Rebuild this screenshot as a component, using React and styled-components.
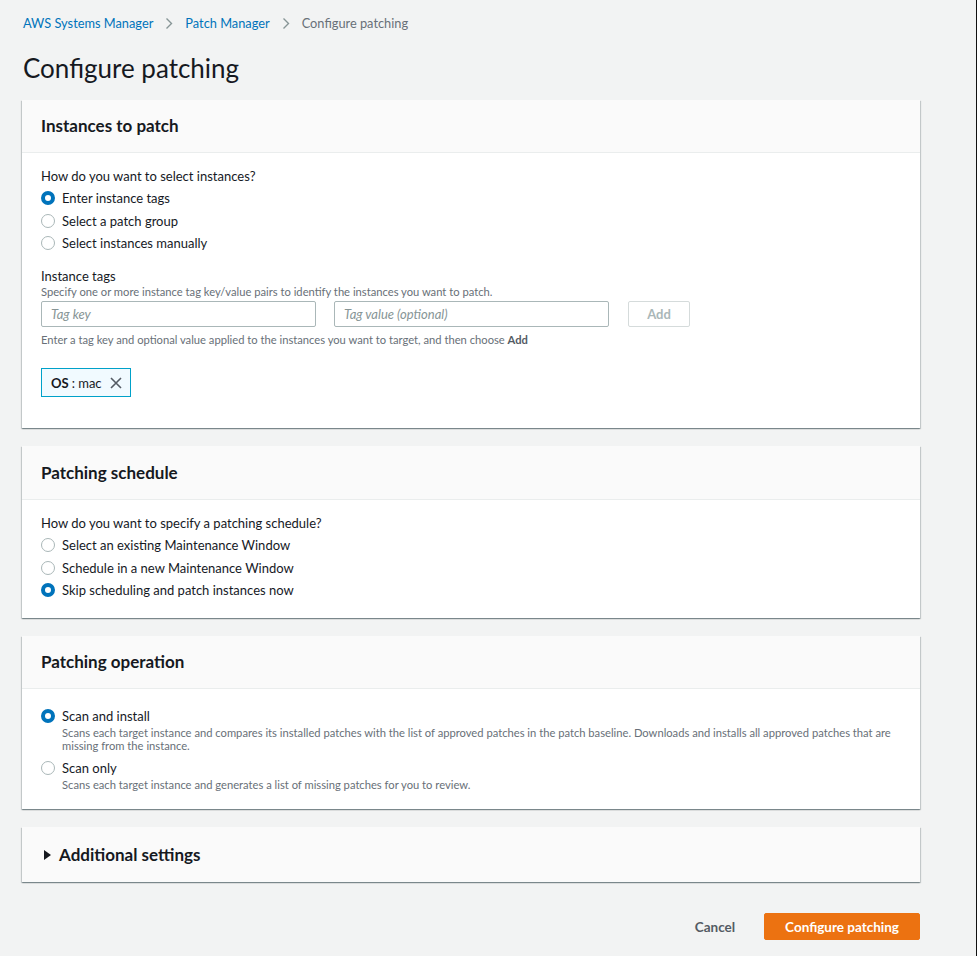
import React from 'react';
import styled, { createGlobalStyle } from 'styled-components';

const GlobalStyle = createGlobalStyle`
  html, body {
    margin: 0;
    padding: 0;
    background: #f2f3f3;
  }
  body {
    font-family: Lato, "Open Sans", Arial, sans-serif;
    color: #16191f;
    -webkit-font-smoothing: antialiased;
  }
  * {
    box-sizing: border-box;
  }
`;

const Page = styled.div`
  min-height: 956px;
  padding: 14px 56px 24px 22px;
  background: #f2f3f3;
  border-right: 1px solid #111;
`;

const Crumbs = styled.nav`
  display: flex;
  align-items: center;
  height: 18px;
  padding-left: 1px;
  font-size: 12.8px;
`;

const Crumb = styled.a`
  color: ${p => (p.$current ? '#687078' : '#0073bb')};
  text-decoration: none;
`;

const Sep = styled.span`
  display: inline-flex;
  margin: 0 12px;
  color: #879596;
`;

const Title = styled.h1`
  margin: 20px 0 16px 1px;
  font-size: 26px;
  line-height: 32px;
  font-weight: 400;
`;

const Card = styled.section`
  background: #fff;
  margin-bottom: 18px;
  box-shadow: 0 1px 1px 0 rgba(0, 28, 36, 0.3), 1px 1px 1px 0 rgba(0, 28, 36, 0.15),
    -1px 1px 1px 0 rgba(0, 28, 36, 0.15);
`;

const CardHeader = styled.header`
  display: flex;
  align-items: center;
  height: ${p => p.$h || 53}px;
  padding: 0 19px;
  background: #fafafa;
  border-bottom: 1px solid #eaeded;
`;

const CardTitle = styled.h2`
  margin: 0;
  font-size: 17px;
  line-height: 22px;
  font-weight: 700;
`;

const CardBody = styled.div`
  padding: ${p => p.$pad || '12px 19px 16px'};
`;

const Question = styled.div`
  font-size: 13px;
  line-height: 20px;
  margin-bottom: 1px;
`;

const RadioRow = styled.label`
  display: flex;
  align-items: ${p => (p.$top ? 'flex-start' : 'center')};
  min-height: 22.5px;
  font-size: 13px;
  line-height: 20px;
  margin-top: ${p => p.$gap || 0}px;
`;

const RadioDot = styled.span`
  flex: none;
  width: 14px;
  height: 14px;
  margin-right: 7px;
  margin-top: ${p => (p.$top ? '3px' : '0')};
  border-radius: 50%;
  background: #fff;
  border: ${p => (p.$checked ? '4px solid #0073bb' : '1px solid #aab7b8')};
`;

const RadioText = styled.div`
  display: flex;
  flex-direction: column;
`;

const Hint = styled.div`
  font-size: 11.2px;
  line-height: 13.5px;
  color: #687078;
`;

const FieldLabel = styled.div`
  margin-top: 12px;
  font-size: 13px;
  line-height: 18px;
`;

const InputRow = styled.div`
  display: flex;
  align-items: center;
  margin-top: 3px;
`;

const Input = styled.input`
  width: 275px;
  height: 26px;
  margin-right: ${p => p.$mr}px;
  padding: 0 9px;
  font-family: inherit;
  font-size: 13px;
  border: 1px solid #aab7b8;
  border-radius: 2px;
  background: #fff;
  outline: none;
  &::placeholder {
    color: #879596;
    font-style: italic;
  }
`;

const AddButton = styled.button`
  width: 62px;
  height: 26px;
  font-family: inherit;
  font-size: 13px;
  font-weight: 700;
  color: #aab7b8;
  background: #fff;
  border: 1px solid #d5dbdb;
  border-radius: 2px;
`;

const HelpText = styled(Hint)`
  margin-top: 5px;
  line-height: 16px;
  b {
    color: #545b64;
  }
`;

const Token = styled.div`
  display: inline-flex;
  align-items: center;
  height: 29px;
  margin-top: 20px;
  padding: 0 7px 0 9px;
  font-size: 13px;
  background: #f1faff;
  border: 1px solid #00a1c9;
  b {
    margin-right: 3px;
  }
`;

const TokenClose = styled.span`
  display: inline-flex;
  margin-left: 7px;
  color: #545b64;
`;

const Expander = styled.section`
  display: flex;
  align-items: center;
  height: 55px;
  margin-top: 1px;
  padding: 0 22px;
  background: #fafafa;
  box-shadow: 0 1px 1px 0 rgba(0, 28, 36, 0.3), 1px 1px 1px 0 rgba(0, 28, 36, 0.15),
    -1px 1px 1px 0 rgba(0, 28, 36, 0.15);
`;

const Caret = styled.span`
  width: 0;
  height: 0;
  margin-right: 8px;
  border-top: 5px solid transparent;
  border-bottom: 5px solid transparent;
  border-left: 7px solid #16191f;
`;

const Footer = styled.div`
  display: flex;
  justify-content: flex-end;
  align-items: center;
  gap: 8px;
  margin-top: 31px;
`;

const Button = styled.button`
  height: 27px;
  padding: 0 20px;
  font-family: inherit;
  font-size: 13.5px;
  font-weight: 700;
  border-radius: 2px;
  border: 1px solid ${p => (p.$primary ? '#ec7211' : 'transparent')};
  background: ${p => (p.$primary ? '#ec7211' : 'transparent')};
  color: ${p => (p.$primary ? '#fff' : '#545b64')};
`;

const Chevron = () => (
  <svg width="8" height="13" viewBox="0 0 8 13" fill="none">
    <path d="M1.5 1.5 6.5 6.5 1.5 11.5" stroke="currentColor" strokeWidth="1.4" />
  </svg>
);

const Radio = ({ checked, label, hint, gap }) => (
  <RadioRow $top={!!hint} $gap={gap}>
    <RadioDot $checked={checked} $top={!!hint} />
    <RadioText>
      {label}
      {hint && <Hint>{hint}</Hint>}
    </RadioText>
  </RadioRow>
);

const App = () => (
  <>
    <GlobalStyle />
    <Page>
      <Crumbs>
        <Crumb href="#">AWS Systems Manager</Crumb>
        <Sep><Chevron /></Sep>
        <Crumb href="#">Patch Manager</Crumb>
        <Sep><Chevron /></Sep>
        <Crumb $current>Configure patching</Crumb>
      </Crumbs>
      <Title>Configure patching</Title>

      <Card>
        <CardHeader>
          <CardTitle>Instances to patch</CardTitle>
        </CardHeader>
        <CardBody $pad="13px 19px 31px">
          <Question>How do you want to select instances?</Question>
          <Radio checked label="Enter instance tags" />
          <Radio label="Select a patch group" />
          <Radio label="Select instances manually" />
          <FieldLabel>Instance tags</FieldLabel>
          <Hint>Specify one or more instance tag key/value pairs to identify the instances you want to patch.</Hint>
          <InputRow>
            <Input placeholder="Tag key" $mr={18} />
            <Input placeholder="Tag value (optional)" $mr={19} />
            <AddButton disabled>Add</AddButton>
          </InputRow>
          <HelpText>
            Enter a tag key and optional value applied to the instances you want to target, and then choose <b>Add</b>
          </HelpText>
          <Token>
            <b>OS</b> : mac
            <TokenClose>
              <svg width="14" height="14" viewBox="0 0 14 14">
                <path d="M2 2l10 10M12 2 2 12" stroke="currentColor" strokeWidth="1.6" />
              </svg>
            </TokenClose>
          </Token>
        </CardBody>
      </Card>

      <Card>
        <CardHeader $h={54}>
          <CardTitle>Patching schedule</CardTitle>
        </CardHeader>
        <CardBody $pad="13px 19px 16px">
          <Question>How do you want to specify a patching schedule?</Question>
          <Radio label="Select an existing Maintenance Window" />
          <Radio label="Schedule in a new Maintenance Window" />
          <Radio checked label="Skip scheduling and patch instances now" />
        </CardBody>
      </Card>

      <Card>
        <CardHeader>
          <CardTitle>Patching operation</CardTitle>
        </CardHeader>
        <CardBody $pad="17px 19px 18px">
          <Radio
            checked
            label="Scan and install"
            hint="Scans each target instance and compares its installed patches with the list of approved patches in the patch baseline. Downloads and installs all approved patches that are missing from the instance."
          />
          <Radio
            gap={5}
            label="Scan only"
            hint="Scans each target instance and generates a list of missing patches for you to review."
          />
        </CardBody>
      </Card>

      <Expander>
        <Caret />
        <CardTitle>Additional settings</CardTitle>
      </Expander>

      <Footer>
        <Button>Cancel</Button>
        <Button $primary>Configure patching</Button>
      </Footer>
    </Page>
  </>
);

export default App;
